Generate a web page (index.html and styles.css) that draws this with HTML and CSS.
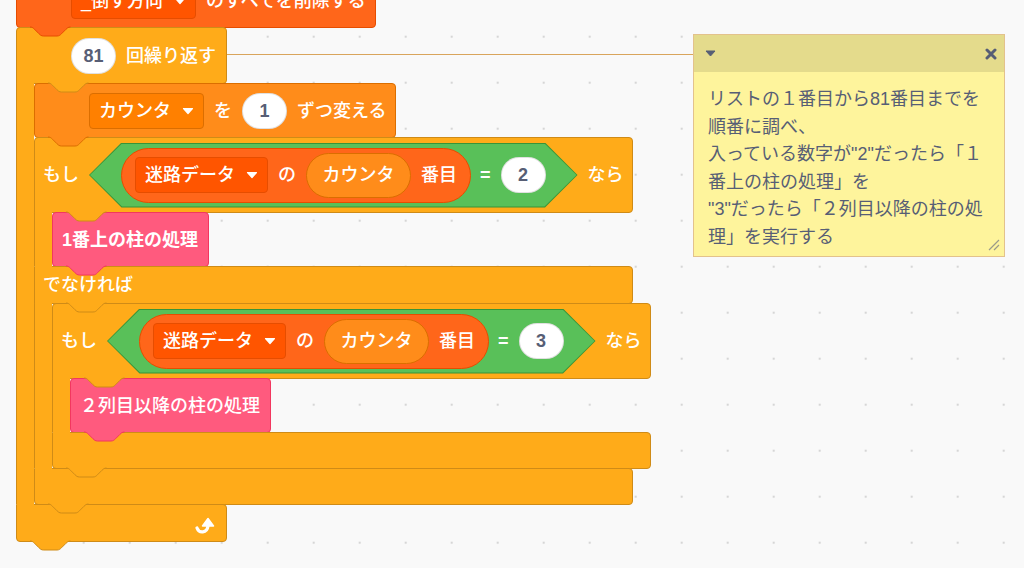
FILE: index.html
```html
<!DOCTYPE html>
<html lang="ja">
<head>
<meta charset="utf-8">
<title>Scratch コード</title>
<link rel="stylesheet" href="styles.css">
</head>
<body>
<main class="workspace">
  <div class="script">
    <div class="piece stack list">
      <div class="dropdown"><span>_倒す方向</span><svg class="caret" width="12" height="8" viewBox="0 0 12 8"><path d="M1.5 1.5 H10.5 L6 6.5 Z"/></svg></div>
      <span class="label">のすべてを削除する</span>
      <svg class="tab" width="41" height="10" viewBox="0 0 41 10"><path class="tf" d="M0,0 C2.25,0 3.375,1.125 4.5,2.25 L9,6.75 C10.125,7.875 11.25,9 13.5,9 H27 C29.25,9 30.375,7.875 31.5,6.75 L36,2.25 C37.125,1.125 38.25,0 40.5,0 Z"/><path class="ts" d="M0,0 C2.25,0 3.375,1.125 4.5,2.25 L9,6.75 C10.125,7.875 11.25,9 13.5,9 H27 C29.25,9 30.375,7.875 31.5,6.75 L36,2.25 C37.125,1.125 38.25,0 40.5,0"/></svg>
    </div>

    <div class="cblock control">
      <div class="piece c-head w-repeat">
        <span class="num">81</span>
        <span class="label">回繰り返す</span>
        <svg class="tab mouth" width="41" height="10" viewBox="0 0 41 10"><path class="tf" d="M0,0 C2.25,0 3.375,1.125 4.5,2.25 L9,6.75 C10.125,7.875 11.25,9 13.5,9 H27 C29.25,9 30.375,7.875 31.5,6.75 L36,2.25 C37.125,1.125 38.25,0 40.5,0 Z"/><path class="ts" d="M0,0 C2.25,0 3.375,1.125 4.5,2.25 L9,6.75 C10.125,7.875 11.25,9 13.5,9 H27 C29.25,9 30.375,7.875 31.5,6.75 L36,2.25 C37.125,1.125 38.25,0 40.5,0"/></svg>
      </div>
      <div class="c-body">
        <div class="c-arm"></div>
        <div class="c-stack">

          <div class="piece stack var">
            <div class="dropdown"><span>カウンタ</span><svg class="caret" width="12" height="8" viewBox="0 0 12 8"><path d="M1.5 1.5 H10.5 L6 6.5 Z"/></svg></div>
            <span class="label">を</span>
            <span class="num">1</span>
            <span class="label">ずつ変える</span>
            <svg class="tab" width="41" height="10" viewBox="0 0 41 10"><path class="tf" d="M0,0 C2.25,0 3.375,1.125 4.5,2.25 L9,6.75 C10.125,7.875 11.25,9 13.5,9 H27 C29.25,9 30.375,7.875 31.5,6.75 L36,2.25 C37.125,1.125 38.25,0 40.5,0 Z"/><path class="ts" d="M0,0 C2.25,0 3.375,1.125 4.5,2.25 L9,6.75 C10.125,7.875 11.25,9 13.5,9 H27 C29.25,9 30.375,7.875 31.5,6.75 L36,2.25 C37.125,1.125 38.25,0 40.5,0"/></svg>
          </div>

          <div class="cblock control">
            <div class="piece c-head tall w-if">
              <span class="label">もし</span>
              <div class="hex">
                <div class="hex-fill">
                  <div class="reporter list">
                    <div class="dropdown"><span>迷路データ</span><svg class="caret" width="12" height="8" viewBox="0 0 12 8"><path d="M1.5 1.5 H10.5 L6 6.5 Z"/></svg></div>
                    <span class="label">の</span>
                    <div class="var-reporter var">カウンタ</div>
                    <span class="label">番目</span>
                  </div>
                  <span class="eq">=</span>
                  <span class="num">2</span>
                </div>
              </div>
              <span class="label">なら</span>
              <svg class="tab mouth" width="41" height="10" viewBox="0 0 41 10"><path class="tf" d="M0,0 C2.25,0 3.375,1.125 4.5,2.25 L9,6.75 C10.125,7.875 11.25,9 13.5,9 H27 C29.25,9 30.375,7.875 31.5,6.75 L36,2.25 C37.125,1.125 38.25,0 40.5,0 Z"/><path class="ts" d="M0,0 C2.25,0 3.375,1.125 4.5,2.25 L9,6.75 C10.125,7.875 11.25,9 13.5,9 H27 C29.25,9 30.375,7.875 31.5,6.75 L36,2.25 C37.125,1.125 38.25,0 40.5,0"/></svg>
            </div>
            <div class="c-body">
              <div class="c-arm"></div>
              <div class="c-stack">
                <div class="piece stack custom">
                  <span class="label strong">1番上の柱の処理</span>
                  <svg class="tab" width="41" height="10" viewBox="0 0 41 10"><path class="tf" d="M0,0 C2.25,0 3.375,1.125 4.5,2.25 L9,6.75 C10.125,7.875 11.25,9 13.5,9 H27 C29.25,9 30.375,7.875 31.5,6.75 L36,2.25 C37.125,1.125 38.25,0 40.5,0 Z"/><path class="ts" d="M0,0 C2.25,0 3.375,1.125 4.5,2.25 L9,6.75 C10.125,7.875 11.25,9 13.5,9 H27 C29.25,9 30.375,7.875 31.5,6.75 L36,2.25 C37.125,1.125 38.25,0 40.5,0"/></svg>
                </div>
              </div>
            </div>
            <div class="piece c-mid w-if">
              <span class="label">でなければ</span>
              <svg class="tab mouth" width="41" height="10" viewBox="0 0 41 10"><path class="tf" d="M0,0 C2.25,0 3.375,1.125 4.5,2.25 L9,6.75 C10.125,7.875 11.25,9 13.5,9 H27 C29.25,9 30.375,7.875 31.5,6.75 L36,2.25 C37.125,1.125 38.25,0 40.5,0 Z"/><path class="ts" d="M0,0 C2.25,0 3.375,1.125 4.5,2.25 L9,6.75 C10.125,7.875 11.25,9 13.5,9 H27 C29.25,9 30.375,7.875 31.5,6.75 L36,2.25 C37.125,1.125 38.25,0 40.5,0"/></svg>
            </div>
            <div class="c-body">
              <div class="c-arm"></div>
              <div class="c-stack">

                <div class="cblock control">
                  <div class="piece c-head tall w-if">
                    <span class="label">もし</span>
                    <div class="hex">
                      <div class="hex-fill">
                        <div class="reporter list">
                          <div class="dropdown"><span>迷路データ</span><svg class="caret" width="12" height="8" viewBox="0 0 12 8"><path d="M1.5 1.5 H10.5 L6 6.5 Z"/></svg></div>
                          <span class="label">の</span>
                          <div class="var-reporter var">カウンタ</div>
                          <span class="label">番目</span>
                        </div>
                        <span class="eq">=</span>
                        <span class="num">3</span>
                      </div>
                    </div>
                    <span class="label">なら</span>
                    <svg class="tab mouth" width="41" height="10" viewBox="0 0 41 10"><path class="tf" d="M0,0 C2.25,0 3.375,1.125 4.5,2.25 L9,6.75 C10.125,7.875 11.25,9 13.5,9 H27 C29.25,9 30.375,7.875 31.5,6.75 L36,2.25 C37.125,1.125 38.25,0 40.5,0 Z"/><path class="ts" d="M0,0 C2.25,0 3.375,1.125 4.5,2.25 L9,6.75 C10.125,7.875 11.25,9 13.5,9 H27 C29.25,9 30.375,7.875 31.5,6.75 L36,2.25 C37.125,1.125 38.25,0 40.5,0"/></svg>
                  </div>
                  <div class="c-body">
                    <div class="c-arm"></div>
                    <div class="c-stack">
                      <div class="piece stack custom">
                        <span class="label">２列目以降の柱の処理</span>
                        <svg class="tab" width="41" height="10" viewBox="0 0 41 10"><path class="tf" d="M0,0 C2.25,0 3.375,1.125 4.5,2.25 L9,6.75 C10.125,7.875 11.25,9 13.5,9 H27 C29.25,9 30.375,7.875 31.5,6.75 L36,2.25 C37.125,1.125 38.25,0 40.5,0 Z"/><path class="ts" d="M0,0 C2.25,0 3.375,1.125 4.5,2.25 L9,6.75 C10.125,7.875 11.25,9 13.5,9 H27 C29.25,9 30.375,7.875 31.5,6.75 L36,2.25 C37.125,1.125 38.25,0 40.5,0"/></svg>
                      </div>
                    </div>
                  </div>
                  <div class="piece c-foot w-if">
                    <svg class="tab" width="41" height="10" viewBox="0 0 41 10"><path class="tf" d="M0,0 C2.25,0 3.375,1.125 4.5,2.25 L9,6.75 C10.125,7.875 11.25,9 13.5,9 H27 C29.25,9 30.375,7.875 31.5,6.75 L36,2.25 C37.125,1.125 38.25,0 40.5,0 Z"/><path class="ts" d="M0,0 C2.25,0 3.375,1.125 4.5,2.25 L9,6.75 C10.125,7.875 11.25,9 13.5,9 H27 C29.25,9 30.375,7.875 31.5,6.75 L36,2.25 C37.125,1.125 38.25,0 40.5,0"/></svg>
                  </div>
                </div>

              </div>
            </div>
            <div class="piece c-foot w-if">
              <svg class="tab" width="41" height="10" viewBox="0 0 41 10"><path class="tf" d="M0,0 C2.25,0 3.375,1.125 4.5,2.25 L9,6.75 C10.125,7.875 11.25,9 13.5,9 H27 C29.25,9 30.375,7.875 31.5,6.75 L36,2.25 C37.125,1.125 38.25,0 40.5,0 Z"/><path class="ts" d="M0,0 C2.25,0 3.375,1.125 4.5,2.25 L9,6.75 C10.125,7.875 11.25,9 13.5,9 H27 C29.25,9 30.375,7.875 31.5,6.75 L36,2.25 C37.125,1.125 38.25,0 40.5,0"/></svg>
            </div>
          </div>

        </div>
      </div>
      <div class="piece c-foot repeat-foot w-repeat">
        <svg class="repeat-icon" width="22" height="20" viewBox="0 0 22 20"><path d="M2 13 C4 18.5 12 18.5 13 11" fill="none" stroke="#fff" stroke-width="3.2" stroke-linecap="round"/><path d="M7.5 11 L18.5 11 L13 3.5 Z" fill="#fff" stroke="#fff" stroke-width="1.5" stroke-linejoin="round"/></svg>
        <svg class="tab" width="41" height="10" viewBox="0 0 41 10"><path class="tf" d="M0,0 C2.25,0 3.375,1.125 4.5,2.25 L9,6.75 C10.125,7.875 11.25,9 13.5,9 H27 C29.25,9 30.375,7.875 31.5,6.75 L36,2.25 C37.125,1.125 38.25,0 40.5,0 Z"/><path class="ts" d="M0,0 C2.25,0 3.375,1.125 4.5,2.25 L9,6.75 C10.125,7.875 11.25,9 13.5,9 H27 C29.25,9 30.375,7.875 31.5,6.75 L36,2.25 C37.125,1.125 38.25,0 40.5,0"/></svg>
      </div>
    </div>
  </div>

  <div class="comment-link"></div>
  <div class="comment">
    <div class="comment-bar">
      <svg class="comment-caret" width="11" height="7" viewBox="0 0 11 7"><path d="M1 1 H10 L5.5 6 Z"/></svg>
      <svg class="comment-close" width="12" height="12" viewBox="0 0 12 12"><path d="M2 2 L10 10 M10 2 L2 10"/></svg>
    </div>
    <div class="comment-body">
      <p class="comment-text">リストの１番目から81番目までを<br>順番に調べ、<br>入っている数字が"2"だったら「１<br>番上の柱の処理」を<br>"3"だったら「２列目以降の柱の処<br>理」を実行する</p>
      <svg class="resize" width="12" height="12" viewBox="0 0 12 12"><path d="M11 1 L1 11 M11 6 L6 11"/></svg>
    </div>
  </div>
</main>
</body>
</html>
```

FILE: styles.css
```css
* { box-sizing: border-box; }
html, body { margin: 0; padding: 0; }
body {
  font-family: "Liberation Sans", "Noto Sans CJK JP", "Noto Sans", sans-serif;
  background: #f9f9f9;
}

.workspace {
  position: relative;
  display: block;
  width: 1024px;
  height: 568px;
  overflow: hidden;
  background-color: #f9f9f9;
  background-image: radial-gradient(circle at 23px 23px, #d6d6d6 0, #d6d6d6 1px, rgba(214,214,214,0) 1.6px);
  background-size: 46px 46px;
  background-position: 14.7px 13.7px;
}

/* category palettes */
.list     { --fill: #ff661a; --dd: #ff5500; --line: #e64d00; }
.var      { --fill: #ff8c1a; --dd: #ff8000; --line: #db6e00; }
.control  { --fill: #ffab19; --line: #cf8b17; }
.custom   { --fill: #ff5a7e; --line: #f2375f; }

/* script (free canvas position) */
.script {
  position: absolute;
  left: 16px;
  top: -27px;
  display: flex;
  flex-direction: column;
  align-items: flex-start;
}

.piece {
  position: relative;
  flex: none;
  display: flex;
  align-items: center;
  gap: 10px;
  margin-bottom: -1px;
  background: var(--fill);
  border: 1px solid var(--line);
  color: #fff;
  font-size: 18px;
  line-height: 18px;
  white-space: nowrap;
}

.stack {
  height: 55px;
  border-radius: 4px;
  padding: 0 9px 0 54px;
}
.custom.stack { padding: 0 10px 0 9px; }

.label { font-weight: 500; }
.strong { font-weight: 700; }

.cblock {
  display: flex;
  flex-direction: column;
  align-items: flex-start;
}
.c-head {
  height: 57px;
  border-radius: 4px 4px 4px 0;
  padding: 0 10px 0 54px;
}
.c-head.tall {
  height: 76px;
  padding-left: 8px;
}
.c-mid {
  height: 38px;
  border-radius: 0 4px 4px 0;
  padding-left: 8px;
}
.c-foot {
  height: 37px;
  border-radius: 0 4px 4px 4px;
}
.repeat-foot {
  height: 38px;
  justify-content: flex-end;
  padding-right: 9px;
}
.w-repeat { width: 211px; }
.w-if { width: 599px; }

.c-head::after,
.c-mid::after {
  content: "";
  position: absolute;
  left: 0;
  bottom: -1px;
  width: 17px;
  height: 1px;
  background: var(--fill);
  z-index: 1;
}
.c-mid::before,
.c-foot::before {
  content: "";
  position: absolute;
  left: 0;
  top: -1px;
  width: 17px;
  height: 1px;
  background: var(--fill);
  z-index: 1;
}

.c-body {
  display: flex;
  align-items: stretch;
}
.c-arm {
  flex: none;
  width: 18px;
  background: var(--fill);
  border-left: 1px solid var(--line);
}
.c-stack {
  display: flex;
  flex-direction: column;
  align-items: flex-start;
}

/* connection tab drawn over the next block's notch */
.tab {
  position: absolute;
  top: 100%;
  left: 12.5px;
  z-index: 3;
  overflow: visible;
}
.tab.mouth { left: 30.5px; }
.tab .tf { fill: var(--fill); }
.tab .ts { fill: none; stroke: var(--line); stroke-width: 1; }

/* fields and inputs */
.dropdown {
  flex: none;
  display: flex;
  align-items: center;
  gap: 11px;
  height: 36px;
  padding: 0 9px 0 9px;
  border-radius: 4px;
  background: var(--dd);
  border: 1px solid var(--line);
  font-weight: 500;
}
.caret path {
  fill: #fff;
  stroke: #fff;
  stroke-width: 1.2;
  stroke-linejoin: round;
}

.num {
  flex: none;
  display: flex;
  align-items: center;
  justify-content: center;
  width: 45px;
  height: 36px;
  border-radius: 18px;
  background: #fff;
  border: 1px solid rgba(0, 0, 0, 0.12);
  color: #575e75;
  font-weight: 700;
}

.eq { font-weight: 700; }

.hex {
  flex: none;
  height: 65px;
  padding: 1px;
  background: #389438;
  clip-path: polygon(32.5px 0, calc(100% - 32.5px) 0, 100% 50%, calc(100% - 32.5px) 100%, 32.5px 100%, 0 50%);
}
.hex-fill {
  display: flex;
  align-items: center;
  gap: 10px;
  height: 100%;
  padding: 0 31px;
  background: #59c059;
  clip-path: polygon(32px 0, calc(100% - 32px) 0, 100% 50%, calc(100% - 32px) 100%, 32px 100%, 0 50%);
}
.hex-fill .eq { margin-left: -1px; }

.reporter {
  flex: none;
  display: flex;
  align-items: center;
  gap: 10px;
  height: 55px;
  padding: 0 13px;
  border-radius: 28px;
  background: var(--fill);
  border: 1px solid var(--line);
}
.var-reporter {
  flex: none;
  display: flex;
  align-items: center;
  height: 45px;
  padding: 0 15.5px;
  border-radius: 23px;
  background: var(--fill);
  border: 1px solid var(--line);
  font-weight: 500;
}

.repeat-icon { margin-top: 3px; }

/* comment */
.comment-link {
  position: absolute;
  left: 227px;
  top: 54px;
  width: 466px;
  height: 1px;
  background: #d9a55c;
}
.comment {
  position: absolute;
  left: 693px;
  top: 34px;
  width: 312px;
  height: 223px;
  display: flex;
  flex-direction: column;
  border: 1px solid #e3c28c;
  background: #fef49c;
}
.comment-bar {
  flex: none;
  height: 37px;
  display: flex;
  align-items: center;
  justify-content: space-between;
  padding: 0 7px 0 11px;
  background: #e4db8c;
}
.comment-caret path {
  fill: #575e75;
  stroke: #575e75;
  stroke-width: 1;
  stroke-linejoin: round;
}
.comment-close path {
  fill: none;
  stroke: #575e75;
  stroke-width: 3;
  stroke-linecap: round;
}
.comment-body {
  position: relative;
  flex: 1;
  padding: 14px 10px 0 14px;
}
.comment-text {
  margin: 0;
  font-size: 18px;
  line-height: 27.6px;
  color: #575e75;
  white-space: nowrap;
}
.resize {
  position: absolute;
  right: 4px;
  bottom: 5px;
}
.resize path {
  fill: none;
  stroke: #9a9a8a;
  stroke-width: 1.2;
}
```
